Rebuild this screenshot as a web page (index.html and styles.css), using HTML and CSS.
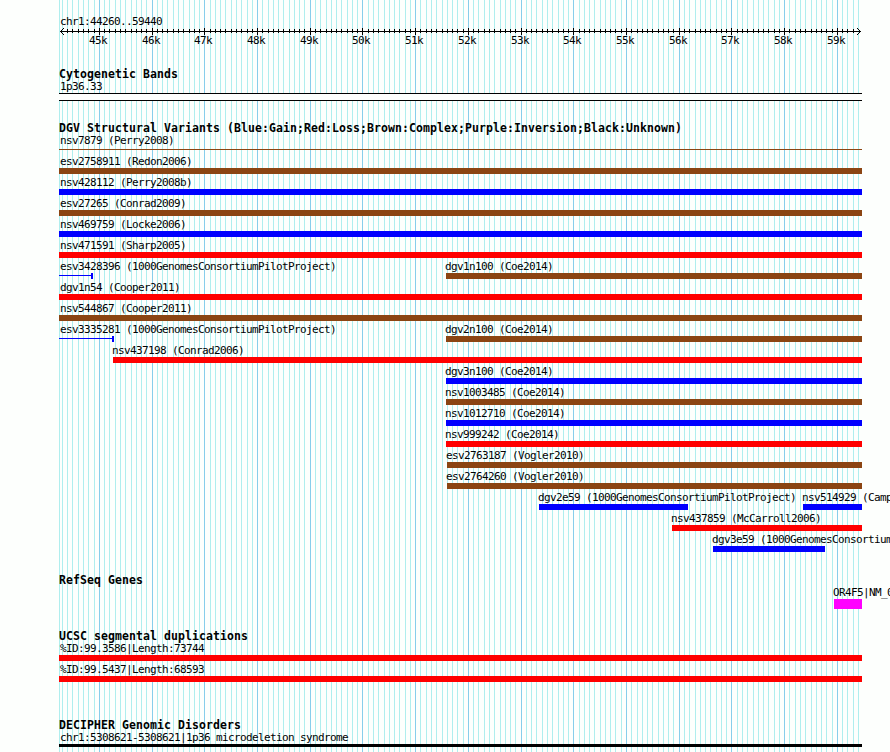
FILE: index.html
```html
<!DOCTYPE html>
<html lang="en">
<head>
<meta charset="utf-8">
<title>chr1:44260..59440</title>
<link rel="stylesheet" href="styles.css">
</head>
<body>
<main class="browser">
  <svg class="grid" id="grid" width="803" height="752" aria-hidden="true"></svg>
  <header class="ruler">
    <div class="label">chr1:44260..59440</div>
    <svg class="axis" id="axis" width="803" height="19"></svg>
  </header>
  <section class="track cyto">
    <h2>Cytogenetic Bands</h2>
    <div class="label">1p36.33</div>
    <div class="band"></div>
  </section>
  <section class="track variants">
    <h2>DGV Structural Variants (Blue:Gain;Red:Loss;Brown:Complex;Purple:Inversion;Black:Unknown)</h2>
    <div id="variants"></div>
  </section>
  <section class="track genes">
    <h2>RefSeq Genes</h2>
    <div id="genes"></div>
  </section>
  <section class="track dups">
    <h2>UCSC segmental duplications</h2>
    <div id="dups"></div>
  </section>
  <section class="track disorders">
    <h2>DECIPHER Genomic Disorders</h2>
    <div id="disorders"></div>
  </section>
</main>
<script src="app.js"></script>
</body>
</html>
```
FILE: styles.css
```css
* { box-sizing: border-box; }
html, body { margin: 0; height: 752px; overflow: hidden; background: #fdfffd; }
body { color: #000; font: 11px/14px "DejaVu Sans Mono", monospace; letter-spacing: -0.622px; }
.browser { position: relative; isolation: isolate; width: 831px; height: 752px; margin-left: 59px; padding-top: 15px; overflow: hidden; }
.grid { position: absolute; top: 0; left: 0; z-index: -1; shape-rendering: crispEdges; }
.minor { fill: #afeeee; }
.major { fill: #87ceeb; }
.label { height: 12px; padding-left: 1px; white-space: nowrap; }
.axis { display: block; overflow: visible; }
.axis rect { fill: #000; shape-rendering: crispEdges; }
.axis text { fill: #000; }
h2 { margin: 0; height: 12px; font-size: 11.5px; line-height: 12px; font-weight: bold; letter-spacing: 0.077px; white-space: nowrap; }
.cyto { margin-top: 22px; }
.band { width: 803px; height: 8px; margin-top: 1px; background: #fdfffd; border: solid #000; border-width: 1px 0; }
.variants { margin-top: 21px; }
.genes { margin-top: 20px; }
.dups { margin-top: 19px; }
.disorders { margin-top: 35px; }
.row { display: grid; height: 21px; }
.genes .row { height: 25px; }
.feature { grid-area: 1 / 1; }
.offset .label { padding-left: 0; margin-left: -1px; }
.bar { height: 6px; margin-top: 1px; }
.brown { background: #8b4513; }
.blue { background: #00f; }
.red { background: #f00; }
.magenta { height: 10px; background: #f0f; }
.black { height: 3px; background: #000; }
.thin { height: 1px; margin-top: 3px; background: #8b4513; }
.span { height: 6px; margin-top: 1px; border-right: 2px solid #00f; background: linear-gradient(#00f, #00f) 0 2px / 100% 1px no-repeat; }
```
FILE: app.js
```javascript
const LEFT = 59;
const WIDTH = 803;

const tracks = {
  variants: [
    [["nsv7879 (Perry2008)", 59, 862, "thin"]],
    [["esv2758911 (Redon2006)", 59, 862, "brown"]],
    [["nsv428112 (Perry2008b)", 59, 862, "blue"]],
    [["esv27265 (Conrad2009)", 59, 862, "brown"]],
    [["nsv469759 (Locke2006)", 59, 862, "blue"]],
    [["nsv471591 (Sharp2005)", 59, 862, "red"]],
    [["esv3428396 (1000GenomesConsortiumPilotProject)", 59, 93, "span"], ["dgv1n100 (Coe2014)", 446, 862, "brown"]],
    [["dgv1n54 (Cooper2011)", 59, 862, "red"]],
    [["nsv544867 (Cooper2011)", 59, 862, "brown"]],
    [["esv3335281 (1000GenomesConsortiumPilotProject)", 59, 114, "span"], ["dgv2n100 (Coe2014)", 446, 862, "brown"]],
    [["nsv437198 (Conrad2006)", 113, 862, "red"]],
    [["dgv3n100 (Coe2014)", 446, 862, "blue"]],
    [["nsv1003485 (Coe2014)", 446, 862, "brown"]],
    [["nsv1012710 (Coe2014)", 446, 862, "blue"]],
    [["nsv999242 (Coe2014)", 446, 862, "red"]],
    [["esv2763187 (Vogler2010)", 447, 862, "brown"]],
    [["esv2764260 (Vogler2010)", 447, 862, "brown"]],
    [["dgv2e59 (1000GenomesConsortiumPilotProject)", 539, 688, "blue"], ["nsv514929 (Campbell2011)", 803, 862, "blue"]],
    [["nsv437859 (McCarroll2006)", 672, 862, "red"]],
    [["dgv3e59 (1000GenomesConsortiumPilotProject)", 713, 825, "blue"]]
  ],
  genes: [[["OR4F5|NM_001005484", 834, 862, "magenta"]]],
  dups: [
    [["%ID:99.3586|Length:73744", 59, 862, "red"]],
    [["%ID:99.5437|Length:68593", 59, 862, "red"]]
  ],
  disorders: [[["chr1:5308621-5308621|1p36 microdeletion syndrome", 59, 862, "black"]]]
};

for (const [id, rows] of Object.entries(tracks)) {
  document.getElementById(id).innerHTML = rows.map(row =>
    '<div class="row">' + row.map(([name, start, end, kind]) =>
      `<div class="feature${start > LEFT ? " offset" : ""}" style="margin-left:${start - LEFT}px;width:${end - start}px">` +
      `<div class="label">${name}</div><div class="${kind === "span" ? "" : "bar "}${kind}"></div></div>`
    ).join("") + "</div>"
  ).join("");
}

// One grid line per 100 bases, a major one per 1000.
let grid = '<rect class="minor" x="0" y="0" width="1" height="752"/>';
let axis = `<rect x="1" y="4" width="${WIDTH - 2}" height="1"/>`;
for (let i = -7; i <= 144; i++) {
  const x = (i === -5 ? 72 : Math.floor(99.43 + 5.271 * i)) - LEFT;
  const major = i % 10 === 0;
  grid += `<rect class="${major ? "major" : "minor"}" x="${x}" y="0" width="1" height="752"/>`;
  if (i > -7 && i < 144) {
    axis += `<rect x="${x}" y="${major ? 1 : 2}" width="1" height="${major ? 7 : 4}"/>`;
  }
  if (major) axis += `<text x="${x - 10}" y="17">${45 + i / 10}k</text>`;
}
// Arrowheads, one pixel step at a time.
for (let d = 1; d <= 3; d++) {
  for (const y of [4 - d, 4 + d]) {
    axis += `<rect x="${1 + d}" y="${y}" width="1" height="1"/>`;
    axis += `<rect x="${WIDTH - 2 - d}" y="${y}" width="1" height="1"/>`;
  }
}
document.getElementById("grid").innerHTML = grid;
document.getElementById("axis").innerHTML = axis;
```
